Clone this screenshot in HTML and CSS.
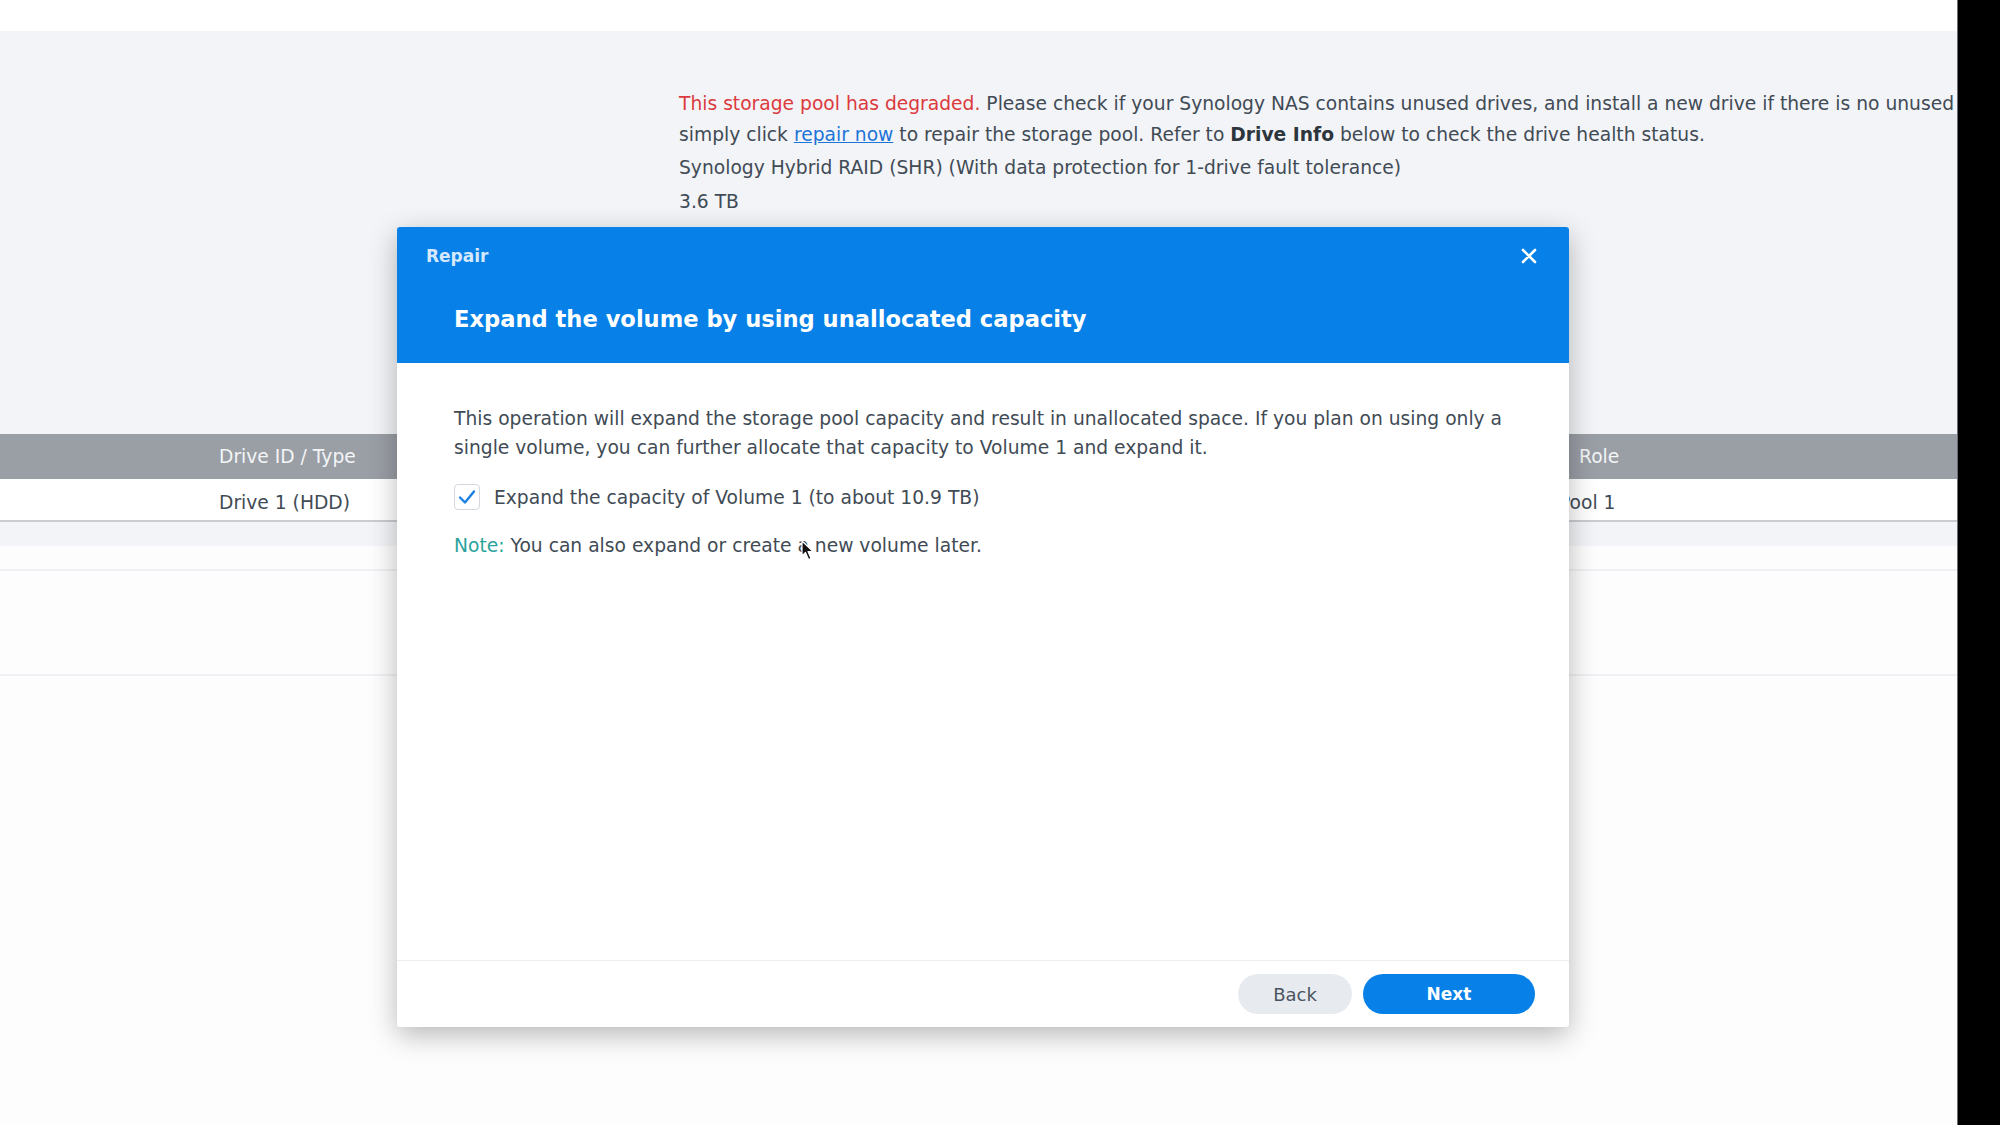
FILE: index.html
```html
<!DOCTYPE html>
<html lang="en">
<head>
    <meta charset="UTF-8">
    <title>Storage Manager - Repair</title>
    <link rel="stylesheet" href="styles.css">
</head>
<body>

<div class="frame">
    <div class="screen">
        <div class="topbar"></div>

        <!-- Storage pool summary -->
        <div class="summary">
            <div class="line"><span class="warn">This storage pool has degraded.</span> Please check if your Synology NAS contains unused drives, and install a new drive if there is no unused</div>
            <div class="line">simply click <a href="#" class="link">repair now</a> to repair the storage pool. Refer to <b>Drive Info</b> below to check the drive health status.</div>
            <div class="row">Synology Hybrid RAID (SHR) (With data protection for 1-drive fault tolerance)</div>
            <div class="row">3.6 TB</div>
        </div>

        <!-- Drive info table -->
        <div class="table">
            <div class="thead">
                <div class="col-id">Drive ID / Type</div>
                <div class="col-role">Role</div>
            </div>
            <div class="trow">
                <div class="col-id">Drive 1 (HDD)</div>
                <div class="col-pool">Pool 1</div>
            </div>
            <div class="band"></div>
            <div class="empty-row"></div>
            <div class="empty-row tall"></div>
        </div>

        <!-- Repair wizard -->
        <div class="dialog">
            <div class="dialog-head">
                <div class="dialog-top">
                    <span class="dialog-name">Repair</span>
                    <svg class="close" width="16" height="16" viewBox="0 0 16 16">
                        <path d="M2 2 L14 14 M14 2 L2 14" stroke="#fff" stroke-width="2.6" stroke-linecap="round"/>
                    </svg>
                </div>
                <h2 class="dialog-title">Expand the volume by using unallocated capacity</h2>
            </div>

            <div class="dialog-body">
                <p class="desc">This operation will expand the storage pool capacity and result in unallocated space. If you plan on using only a single volume, you can further allocate that capacity to Volume 1 and expand it.</p>
                <label class="check-row">
                    <span class="checkbox">
                        <svg width="18" height="16" viewBox="0 0 18 16">
                            <path d="M2 8.5 L7 13.5 L16 2.5" fill="none" stroke="#1a7fe3" stroke-width="2.4" stroke-linecap="round" stroke-linejoin="round"/>
                        </svg>
                    </span>
                    Expand the capacity of Volume 1 (to about 10.9 TB)
                </label>
                <p class="note"><span class="note-label">Note:</span> You can also expand or create a new volume later.</p>
            </div>

            <div class="dialog-foot">
                <button class="btn btn-back">Back</button>
                <button class="btn btn-next">Next</button>
            </div>
        </div>

        <!-- mouse pointer -->
        <svg class="cursor" width="14" height="21" viewBox="0 0 14 21">
            <path d="M1 1 L1 16 L4.5 12.5 L7.5 19.5 L10 18.5 L7 11.5 L12 11.5 Z" fill="#111" stroke="#fff" stroke-width="1.2" stroke-linejoin="round"/>
        </svg>
    </div>
    <div class="blackbar"></div>
</div>

</body>
</html>
```

FILE: styles.css
```css
body {
    margin: 0;
    padding: 0;
    font-family: "DejaVu Sans", Verdana, sans-serif;
    font-size: 18.7px;
    color: #414b55;
    background-color: #fff;
}

.frame {
    display: flex;
    width: 2000px;
    height: 1125px;
    overflow: hidden;
}

.screen {
    position: relative;
    width: 1957px;
    height: 1125px;
    overflow: hidden;
    background-color: #fdfdfe;
}

.blackbar {
    flex: 1;
    background-color: #000;
    border-left: 1px solid #6b6f74;
}

.topbar {
    height: 31px;
    background-color: #fff;
}

.summary {
    height: 346px;
    padding: 57px 0 0 679px;
    background-color: #f3f4f7;
}

.summary .line {
    line-height: 31px;
    white-space: nowrap;
}

.summary .row {
    line-height: 34px;
    white-space: nowrap;
}

.summary .line + .row {
    margin-top: 1px;
}

.warn {
    color: #dc3a3e;
}

.link {
    color: #1d74d8;
}

.summary b {
    color: #2d353d;
}

/* table */
.thead, .trow {
    display: flex;
    align-items: center;
}

.thead {
    height: 45px;
    background-color: #9a9ea5;
    color: #f3f5f7;
}

.trow {
    height: 43px;
    padding-top: 5px;
    box-sizing: border-box;
    background-color: #fff;
    border-bottom: 2px solid #c9ccd1;
}

.col-id {
    width: 1360px;
    padding-left: 219px;
}

.col-pool {
    margin-left: -20px;
}

.band {
    height: 24px;
    background-color: #f3f4f7;
}

.empty-row {
    height: 23px;
    border-bottom: 2px solid #eef0f3;
}

.empty-row.tall {
    height: 103px;
}

/* dialog */
.dialog {
    position: absolute;
    left: 397px;
    top: 227px;
    width: 1172px;
    height: 800px;
    display: flex;
    flex-direction: column;
    background-color: #fff;
    border-radius: 3px;
    box-shadow: 0 8px 28px rgba(0, 0, 0, 0.28);
    overflow: hidden;
}

.dialog-head {
    height: 136px;
    background-color: #0781e8;
    color: #fff;
}

.dialog-top {
    display: flex;
    justify-content: space-between;
    align-items: center;
    height: 57px;
    padding: 0 32px 0 29px;
}

.dialog-name {
    font-size: 17px;
    font-weight: bold;
    color: #d6e8fb;
}

.dialog-title {
    margin: 0;
    padding: 21px 0 0 57px;
    font-size: 22.6px;
    font-weight: bold;
    line-height: 28px;
}

.dialog-body {
    flex: 1;
    padding: 41px 57px 0 57px;
    border-bottom: 1px solid #eceef1;
}

.desc {
    margin: 0;
    line-height: 29px;
}

.check-row {
    display: flex;
    align-items: center;
    gap: 14px;
    margin-top: 22px;
}

.checkbox {
    display: flex;
    align-items: center;
    justify-content: center;
    width: 24px;
    height: 24px;
    border: 1px solid #d3d8de;
    border-radius: 4px;
    background-color: #fff;
}

.note {
    margin: 25px 0 0 0;
}

.note-label {
    color: #2aa39c;
}

.dialog-foot {
    display: flex;
    justify-content: flex-end;
    align-items: center;
    gap: 11px;
    height: 66px;
    padding-right: 34px;
}

.btn {
    height: 40px;
    border: none;
    border-radius: 20px;
    font-family: "DejaVu Sans", Verdana, sans-serif;
    font-size: 18px;
    cursor: pointer;
}

.btn-back {
    width: 114px;
    background-color: #e7ebf0;
    color: #4a5460;
}

.btn-next {
    width: 172px;
    background-color: #0781e8;
    color: #fff;
    font-weight: bold;
    font-size: 17px;
}

.cursor {
    position: absolute;
    left: 801px;
    top: 540px;
}
```
